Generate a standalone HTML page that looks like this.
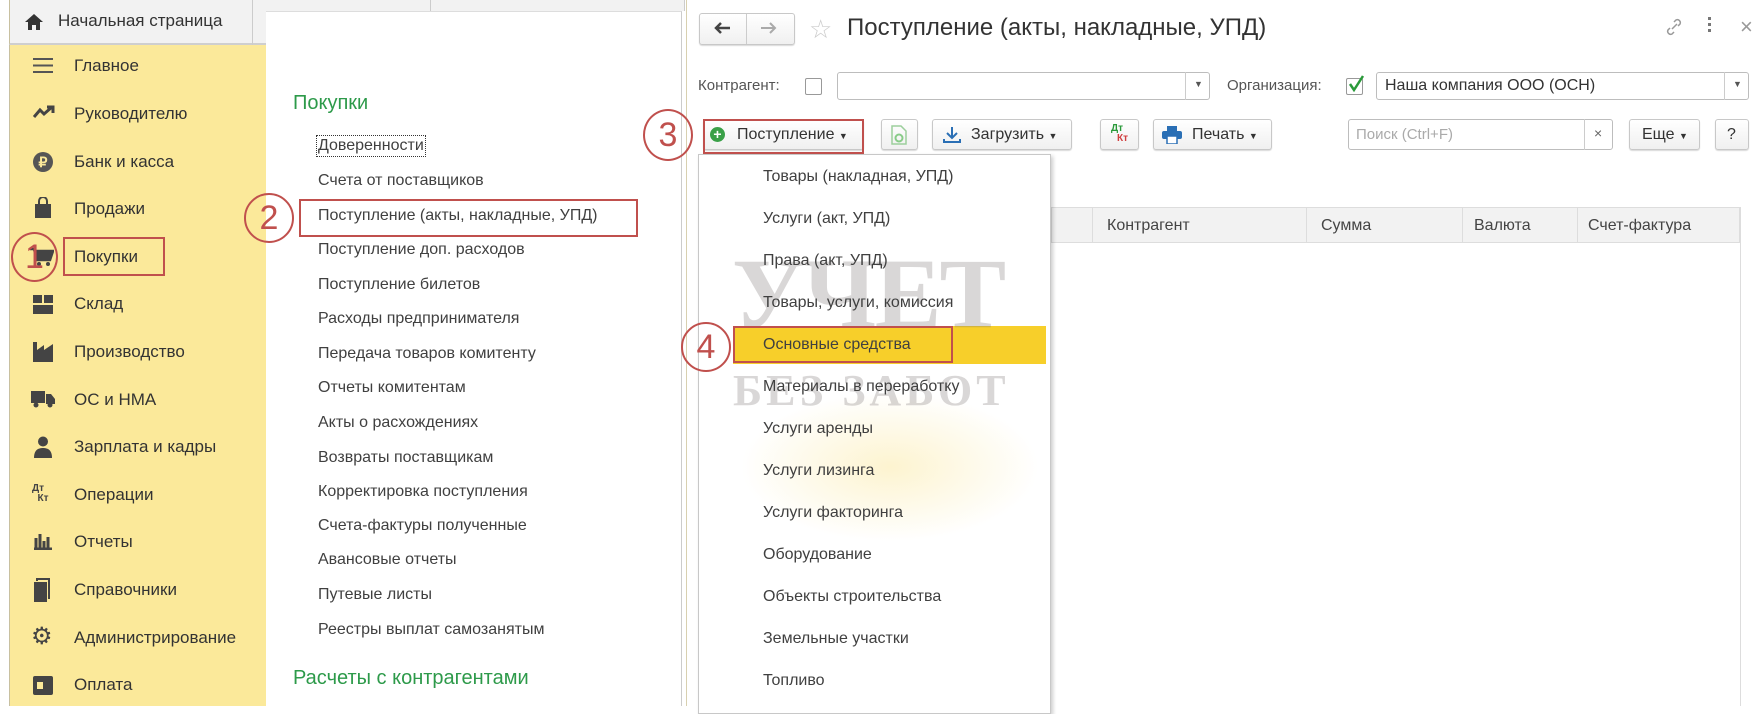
<!DOCTYPE html>
<html><head><meta charset="utf-8">
<style>
*{margin:0;padding:0;box-sizing:border-box}
body{width:1760px;height:706px;overflow:hidden;background:#fff;font-family:"Liberation Sans",Arial,sans-serif;color:#333;position:relative}
.a{position:absolute;white-space:nowrap}
.side{left:9px;top:45px;width:257px;height:661px;background:#fbe99a;border-left:1px solid #c8c0a0}
.si{position:absolute;left:74px;font-size:17px;color:#333;transform:translateY(-50%)}
.ic{position:absolute;left:34px;width:20px;height:20px;transform:translateY(-50%);color:#4a4a4a;font-size:17px;text-align:center;line-height:20px}
.mi{position:absolute;left:318px;font-size:16px;color:#404040;transform:translateY(-50%)}
.dd{position:absolute;left:763px;font-size:16px;color:#404040;transform:translateY(-50%)}
.btn{position:absolute;height:31px;border:1px solid #c8c8c8;border-radius:3px;background:linear-gradient(#fff,#f0f0f0);box-shadow:0 1px 1px rgba(0,0,0,.15);font-size:16px;color:#333;line-height:29px;padding-left:10px}
.inp{position:absolute;border:1px solid #bdbdbd;border-radius:3px;background:#fff;height:28px}
.circ{position:absolute;border:2px solid #c0504d;border-radius:50%;color:#c0504d;font-size:34px;text-align:center;font-family:"Liberation Sans",sans-serif}
.rb{position:absolute;border:2px solid #c0504d}
.th{position:absolute;top:209px;font-size:16px;color:#444;line-height:33px}
.cb{position:absolute;width:17px;height:17px;border:1px solid #999;background:#fff;border-radius:2px}
</style></head><body>

<!-- top header / tabs -->
<div class="a" style="left:9px;top:0;width:257px;height:45px;background:#f2f2f2;border-bottom:2px solid #cfcfcf;border-left:1px solid #c8c0a0"></div>
<div class="a" style="left:255px;top:0;width:430px;height:11px;background:#f2f2f2;border-right:1px solid #ccc"></div>
<div class="a" style="left:252px;top:0;width:1px;height:45px;background:#ccc"></div>
<div class="a" style="left:430px;top:0;width:1px;height:11px;background:#ccc"></div>
<svg class="a" style="left:24px;top:13px" width="20" height="18" viewBox="0 0 20 18"><path d="M10 1 L19 9 H16 V17 H12 V12 H8 V17 H4 V9 H1 Z" fill="#333"/></svg>
<div class="a" style="left:58px;top:11px;font-size:17px;color:#333">Начальная страница</div>

<div class="a side"></div>
<!-- sidebar icons -->
<svg class="a" style="left:33px;top:57px" width="20" height="17"><path d="M0 2h20M0 8.5h20M0 15h20" stroke="#555" stroke-width="2"/></svg>
<svg class="a" style="left:33px;top:105px" width="22" height="14"><path d="M1 12 L7 5 L11 9 L19 2 M14 2h6v6" stroke="#444" stroke-width="3" fill="none"/></svg>
<div class="a" style="left:33px;top:152px;width:20px;height:20px;border-radius:50%;background:#555;color:#fbe99a;font-size:14px;font-weight:bold;text-align:center;line-height:20px">₽</div>
<svg class="a" style="left:34px;top:197px" width="18" height="22"><path d="M5 7V4a4 4 0 0 1 8 0v3" stroke="#444" stroke-width="2" fill="none"/><rect x="1" y="7" width="16" height="14" fill="#444"/></svg>
<svg class="a" style="left:30px;top:247px" width="24" height="20"><path d="M0 2h4l3 11h13l3-9H6" stroke="#444" stroke-width="2.5" fill="#444"/><circle cx="9" cy="17" r="2" fill="#444"/><circle cx="18" cy="17" r="2" fill="#444"/></svg>
<svg class="a" style="left:33px;top:295px" width="20" height="19"><rect x="0" y="0" width="9" height="8" fill="#444"/><rect x="11" y="0" width="9" height="8" fill="#444"/><rect x="0" y="10" width="20" height="9" fill="#444"/></svg>
<svg class="a" style="left:33px;top:342px" width="20" height="20"><path d="M0 20V0h4v8l7-5v5l9-6v18z" fill="#444"/></svg>
<svg class="a" style="left:31px;top:391px" width="24" height="17"><rect x="0" y="0" width="14" height="12" fill="#444"/><path d="M15 3h5l4 5v5h-9z" fill="#444"/><circle cx="5" cy="14" r="2.5" fill="#444"/><circle cx="19" cy="14" r="2.5" fill="#444"/></svg>
<svg class="a" style="left:34px;top:436px" width="18" height="22"><circle cx="9" cy="5.5" r="5" fill="#444"/><path d="M0 22c0-8 4-10 9-10s9 2 9 10z" fill="#444"/></svg>
<div class="a" style="left:32px;top:484px;font-size:10px;color:#444;line-height:10px;font-weight:bold">Дт<br>&nbsp;&nbsp;Кт</div>
<svg class="a" style="left:34px;top:534px" width="18" height="16"><path d="M0 15h18M2 15V4M6 15V0M10 15V7M14 15V3" stroke="#444" stroke-width="3"/></svg>
<svg class="a" style="left:34px;top:578px" width="18" height="24"><rect x="0" y="4" width="13" height="20" fill="#444"/><path d="M3 3V1h12v19h-1" stroke="#444" stroke-width="2" fill="none"/></svg>
<div class="a" style="left:31px;top:625px;font-size:24px;color:#444;line-height:24px">⚙</div>
<svg class="a" style="left:33px;top:676px" width="20" height="19"><rect x="0" y="0" width="20" height="19" rx="2" fill="#444"/><rect x="4" y="6" width="6" height="7" fill="#fbe99a"/></svg>

<div class="si" style="top:66px">Главное</div>
<div class="si" style="top:114px">Руководителю</div>
<div class="si" style="top:162px">Банк и касса</div>
<div class="si" style="top:209px">Продажи</div>
<div class="si" style="top:257px">Покупки</div>
<div class="si" style="top:304px">Склад</div>
<div class="si" style="top:352px">Производство</div>
<div class="si" style="top:400px">ОС и НМА</div>
<div class="si" style="top:447px">Зарплата и кадры</div>
<div class="si" style="top:495px">Операции</div>
<div class="si" style="top:542px">Отчеты</div>
<div class="si" style="top:590px">Справочники</div>
<div class="si" style="top:638px">Администрирование</div>
<div class="si" style="top:685px">Оплата</div>

<!-- middle panel -->
<div class="a" style="left:266px;top:11px;width:416px;height:695px;background:#fff;border-top:1px solid #ddd;border-right:1px solid #ccc"></div>
<div class="a" style="left:293px;top:92px;font-size:20px;color:#2d9a4a">Покупки</div>
<div class="mi" style="top:146px;outline:1px dotted #333;outline-offset:1px">Доверенности</div>
<div class="mi" style="top:181px">Счета от поставщиков</div>
<div class="mi" style="top:216px">Поступление (акты, накладные, УПД)</div>
<div class="mi" style="top:250px">Поступление доп. расходов</div>
<div class="mi" style="top:285px">Поступление билетов</div>
<div class="mi" style="top:319px">Расходы предпринимателя</div>
<div class="mi" style="top:354px">Передача товаров комитенту</div>
<div class="mi" style="top:388px">Отчеты комитентам</div>
<div class="mi" style="top:423px">Акты о расхождениях</div>
<div class="mi" style="top:458px">Возвраты поставщикам</div>
<div class="mi" style="top:492px">Корректировка поступления</div>
<div class="mi" style="top:526px">Счета-фактуры полученные</div>
<div class="mi" style="top:560px">Авансовые отчеты</div>
<div class="mi" style="top:595px">Путевые листы</div>
<div class="mi" style="top:630px">Реестры выплат самозанятым</div>
<div class="a" style="left:293px;top:667px;font-size:20px;color:#2d9a4a">Расчеты с контрагентами</div>

<!-- right panel -->
<div class="a" style="left:686px;top:0;width:1px;height:706px;background:#d8d0b0"></div>
<div class="a" style="left:699px;top:13px;width:96px;height:32px;border:1px solid #c8c8c8;border-radius:3px;background:linear-gradient(#fff,#f0f0f0);box-shadow:0 1px 1px rgba(0,0,0,.15)"></div>
<div class="a" style="left:746px;top:14px;width:1px;height:30px;background:#ccc"></div>
<svg class="a" style="left:713px;top:21px" width="18" height="14"><path d="M17 7H3M8 2L3 7l5 5" stroke="#444" stroke-width="2.5" fill="none"/></svg>
<svg class="a" style="left:760px;top:21px" width="18" height="14"><path d="M1 7h14M10 2l5 5-5 5" stroke="#aaa" stroke-width="2" fill="none"/></svg>
<div class="a" style="left:809px;top:14px;font-size:26px;color:#ccc">☆</div>
<div class="a" style="left:847px;top:14px;font-size:24px;color:#333">Поступление (акты, накладные, УПД)</div>
<svg class="a" style="left:1664px;top:17px" width="20" height="20"><path d="M8 12l5-5M10 5l2-2a3 3 0 0 1 4 4l-2 2M10 15l-2 2a3 3 0 0 1-4-4l2-2" stroke="#999" stroke-width="1.5" fill="none"/></svg>
<div class="a" style="left:1708px;top:17px;width:3px;height:3px;background:#777;box-shadow:0 6px 0 #777,0 12px 0 #777"></div>
<div class="a" style="left:1740px;top:14px;font-size:22px;color:#999">×</div>

<div class="a" style="left:698px;top:77px;font-size:15px;color:#555">Контрагент:</div>
<div class="cb" style="left:805px;top:78px"></div>
<div class="inp" style="left:837px;top:72px;width:373px"></div>
<div class="a" style="left:1185px;top:72px;width:1px;height:28px;background:#ccc"></div>
<div class="a" style="left:1194px;top:79px;font-size:9px;color:#555">▼</div>
<div class="a" style="left:1227px;top:77px;font-size:15px;color:#555">Организация:</div>
<div class="cb" style="left:1346px;top:78px"></div>
<svg class="a" style="left:1347px;top:74px" width="18" height="20"><path d="M3 10l4 6L16 2" stroke="#2a9a3a" stroke-width="2.5" fill="none"/></svg>
<div class="inp" style="left:1376px;top:72px;width:373px"></div>
<div class="a" style="left:1385px;top:77px;font-size:16px;color:#333">Наша компания ООО (ОСН)</div>
<div class="a" style="left:1724px;top:72px;width:1px;height:28px;background:#ccc"></div>
<div class="a" style="left:1733px;top:79px;font-size:9px;color:#555">▼</div>

<!-- toolbar -->
<div class="btn" style="left:703px;top:119px;width:161px;padding-left:33px">Поступление <span style="font-size:9px">▼</span></div>
<div class="a" style="left:710px;top:127px;width:15px;height:15px;border-radius:50%;background:#3aa048;color:#fff;font-size:14px;font-weight:bold;line-height:15px;text-align:center">+</div>
<div class="btn" style="left:881px;top:119px;width:37px"></div>
<svg class="a" style="left:890px;top:125px" width="18" height="20"><path d="M2 1h9l5 5v13H2z" fill="none" stroke="#9ccf9c" stroke-width="1.5"/><circle cx="9" cy="13" r="3.5" fill="none" stroke="#8c8" stroke-width="2"/></svg>
<div class="btn" style="left:932px;top:119px;width:140px;padding-left:38px">Загрузить <span style="font-size:9px">▼</span></div>
<svg class="a" style="left:943px;top:126px" width="18" height="18"><path d="M9 1v10M4 7l5 5 5-5M1 13v3h16v-3" stroke="#2a6fb5" stroke-width="2" fill="none"/></svg>
<div class="btn" style="left:1100px;top:119px;width:39px;padding:0"></div>
<div class="a" style="left:1111px;top:123px;font-size:10px;color:#2a9a3a;font-weight:bold">Дт</div>
<div class="a" style="left:1117px;top:133px;font-size:10px;color:#d04040;font-weight:bold">Кт</div>
<div class="btn" style="left:1153px;top:119px;width:119px;padding-left:38px">Печать <span style="font-size:9px">▼</span></div>
<svg class="a" style="left:1162px;top:126px" width="20" height="18"><rect x="5" y="0" width="10" height="5" fill="#2a6fb5"/><rect x="0" y="5" width="20" height="8" rx="2" fill="#2a6fb5"/><rect x="5" y="10" width="10" height="8" fill="#fff" stroke="#2a6fb5" stroke-width="1.5"/></svg>
<div class="inp" style="left:1348px;top:119px;width:265px;height:31px"></div>
<div class="a" style="left:1356px;top:126px;font-size:15px;color:#aaa">Поиск (Ctrl+F)</div>
<div class="a" style="left:1584px;top:119px;width:1px;height:31px;background:#ccc"></div>
<div class="a" style="left:1594px;top:125px;font-size:14px;color:#666">×</div>
<div class="btn" style="left:1629px;top:119px;width:71px;padding-left:12px">Еще <span style="font-size:9px">▼</span></div>
<div class="btn" style="left:1715px;top:119px;width:34px;padding-left:11px">?</div>

<!-- table header -->
<div class="a" style="left:1051px;top:207px;width:689px;height:36px;background:#f2f2f2;border:1px solid #ddd"></div>
<div class="a" style="left:1092px;top:207px;width:1px;height:36px;background:#ddd"></div>
<div class="a" style="left:1306px;top:207px;width:1px;height:36px;background:#ddd"></div>
<div class="a" style="left:1462px;top:207px;width:1px;height:36px;background:#ddd"></div>
<div class="a" style="left:1577px;top:207px;width:1px;height:36px;background:#ddd"></div>
<div class="th" style="left:1107px">Контрагент</div>
<div class="th" style="left:1321px">Сумма</div>
<div class="th" style="left:1474px">Валюта</div>
<div class="th" style="left:1588px">Счет-фактура</div>
<div class="a" style="left:1740px;top:207px;width:1px;height:499px;background:#ddd"></div>

<!-- dropdown -->
<div class="a" style="left:698px;top:154px;width:353px;height:560px;background:#fff;border:1px solid #c8c8c8;box-shadow:2px 2px 4px rgba(0,0,0,.2)"></div>
<div class="a" style="left:733px;top:326px;width:313px;height:38px;background:#f7cf2a"></div>
<!-- watermark -->
<div class="a" style="left:740px;top:392px;width:300px;height:150px;border-radius:50%;background:radial-gradient(ellipse,rgba(250,230,150,.45),rgba(250,230,150,0) 70%)"></div>
<div class="a" style="left:732px;top:236px;font-size:100px;font-family:'Liberation Serif',serif;color:rgba(120,110,110,.28);font-weight:bold;letter-spacing:-2px">УЧЕТ</div>
<div class="a" style="left:733px;top:365px;font-size:44px;font-family:'Liberation Serif',serif;color:rgba(120,110,110,.28);font-weight:bold;letter-spacing:4px">БЕЗ ЗАБОТ</div>

<div class="dd" style="top:177px">Товары (накладная, УПД)</div>
<div class="dd" style="top:219px">Услуги (акт, УПД)</div>
<div class="dd" style="top:261px">Права (акт, УПД)</div>
<div class="dd" style="top:303px">Товары, услуги, комиссия</div>
<div class="dd" style="top:345px">Основные средства</div>
<div class="dd" style="top:387px">Материалы в переработку</div>
<div class="dd" style="top:429px">Услуги аренды</div>
<div class="dd" style="top:471px">Услуги лизинга</div>
<div class="dd" style="top:513px">Услуги факторинга</div>
<div class="dd" style="top:555px">Оборудование</div>
<div class="dd" style="top:597px">Объекты строительства</div>
<div class="dd" style="top:639px">Земельные участки</div>
<div class="dd" style="top:681px">Топливо</div>

<!-- annotations -->
<div class="rb" style="left:63px;top:237px;width:102px;height:39px"></div>
<div class="rb" style="left:299px;top:199px;width:339px;height:38px"></div>
<div class="rb" style="left:703px;top:119px;width:161px;height:35px"></div>
<div class="rb" style="left:733px;top:326px;width:220px;height:37px"></div>
<div class="circ" style="left:11px;top:232px;width:47px;height:50px;line-height:46px">1</div>
<div class="circ" style="left:244px;top:193px;width:50px;height:50px;line-height:46px">2</div>
<div class="circ" style="left:643px;top:109px;width:50px;height:52px;line-height:48px">3</div>
<div class="circ" style="left:681px;top:322px;width:50px;height:50px;line-height:46px">4</div>
</body></html>
